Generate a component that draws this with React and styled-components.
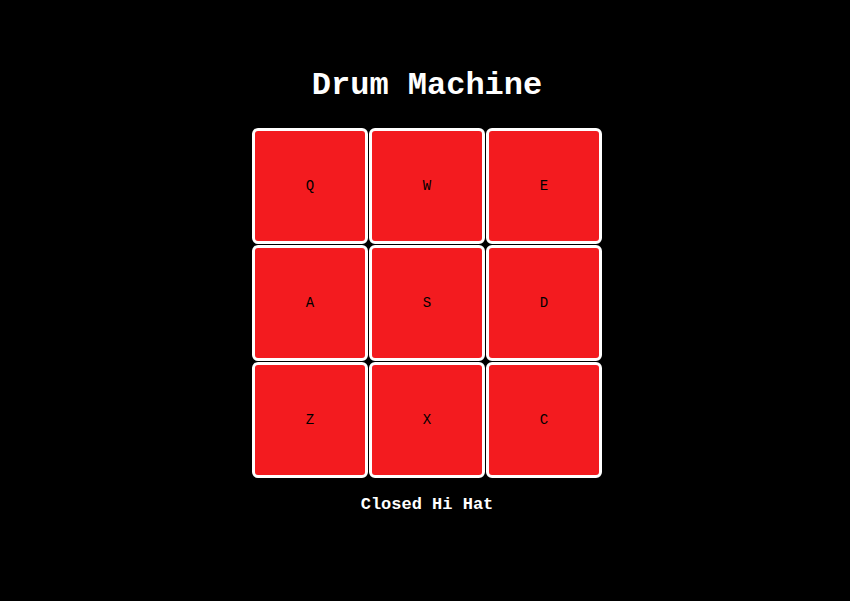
import styled, { createGlobalStyle } from 'styled-components';

const GlobalStyle = createGlobalStyle`
  html, body {
    margin: 0;
    padding: 0;
    background: #000;
  }
  body {
    font-family: "Liberation Mono", "DejaVu Sans Mono", monospace;
  }
`;

const Machine = styled.div`
  width: 850px;
  height: 601px;
  box-sizing: border-box;
  padding: 66px 0 0 4px;
  display: flex;
  flex-direction: column;
  align-items: center;
  background: #000;
  color: #fff;
`;

const Title = styled.h1`
  margin: 0;
  font-size: 32px;
  font-weight: 700;
  line-height: 40px;
  letter-spacing: 0;
`;

const PadGrid = styled.div`
  margin-top: 22px;
  display: grid;
  grid-template-columns: repeat(3, 116px);
  grid-auto-rows: 116px;
  gap: 1px;
`;

const Pad = styled.button`
  box-sizing: border-box;
  width: 116px;
  height: 116px;
  padding: 0;
  border: 3px solid #fff;
  border-radius: 6px;
  background: #f31b1f;
  color: #000;
  font-family: "Liberation Mono", monospace;
  font-size: 14px;
  cursor: pointer;
`;

const Display = styled.p`
  margin: 16px 0 0;
  font-size: 17px;
  font-weight: 700;
  line-height: 22px;
`;

const pads = ['Q', 'W', 'E', 'A', 'S', 'D', 'Z', 'X', 'C'];

export default function App() {
  return (
    <Machine>
      <GlobalStyle />
      <Title>Drum Machine</Title>
      <PadGrid>
        {pads.map((key) => (
          <Pad key={key}>{key}</Pad>
        ))}
      </PadGrid>
      <Display>Closed Hi Hat</Display>
    </Machine>
  );
}
